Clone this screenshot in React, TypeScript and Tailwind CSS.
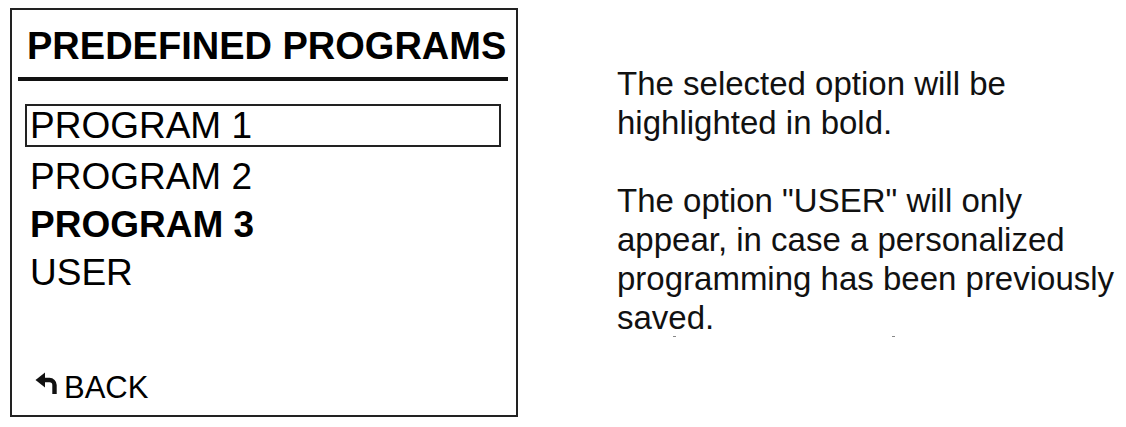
import React from 'react';

const programs = [
  { label: 'PROGRAM 2', bold: false },
  { label: 'PROGRAM 3', bold: true },
  { label: 'USER', bold: false },
];

function BackArrow() {
  return (
    <svg width="24" height="24" viewBox="0 0 24 24" className="mt-[2px] shrink-0">
      <path d="M0.5 8 L10 0.5 L10 15.5 Z" fill="#111" />
      <path d="M9 8 H14.5 A5 5 0 0 1 19.5 13 V22" fill="none" stroke="#111" strokeWidth="4.4" />
    </svg>
  );
}

export default function App() {
  return (
    <div
      className="flex w-[1126px] h-[427px] bg-white text-black overflow-hidden"
      style={{ fontFamily: '"Liberation Sans", Arial, sans-serif' }}
    >
      {/* Display panel */}
      <div className="ml-[10px] mt-[8px] w-[508px] h-[409px] border-2 border-[#222] flex flex-col shrink-0">
        <h1 className="ml-[15px] mt-[13px] text-[38px] leading-[46px] font-bold whitespace-nowrap">
          PREDEFINED PROGRAMS
        </h1>
        <div className="ml-[6px] mt-[8px] w-[490px] h-[4px] bg-[#111]" />

        <div className="ml-[13px] mt-[23px] w-[476px] h-[43px] border-2 border-[#222] pl-[3px]">
          <p className="text-[37px] leading-[39px] whitespace-nowrap">PROGRAM 1</p>
        </div>

        <div className="ml-[18px] mt-[6px] flex flex-col">
          {programs.map(p => (
            <p
              key={p.label}
              className={`text-[37px] leading-[48px] whitespace-nowrap ${p.bold ? 'font-bold' : 'font-normal'}`}
            >
              {p.label}
            </p>
          ))}
        </div>

        <div className="mt-auto mb-[9px] ml-[23px] flex items-start gap-[5px]">
          <BackArrow />
          <span className="text-[31px] leading-[36px]">BACK</span>
        </div>
      </div>

      {/* Notes */}
      <div className="ml-[99px] mt-[64px] flex flex-col text-[33px] leading-[39px] text-[#111] whitespace-nowrap">
        <p>The selected option will be</p>
        <p>highlighted in bold.</p>
        <p className="mt-[39px]">The option "USER" will only</p>
        <p>appear, in case a personalized</p>
        <p>programming has been previously</p>
        <p>saved.</p>
        <div className="flex mt-[-1px]">
          <span className="ml-[56px] w-[3px] h-[1px] bg-[#888]" />
          <span className="ml-[216px] w-[3px] h-[1px] bg-[#888]" />
        </div>
      </div>
    </div>
  );
}
